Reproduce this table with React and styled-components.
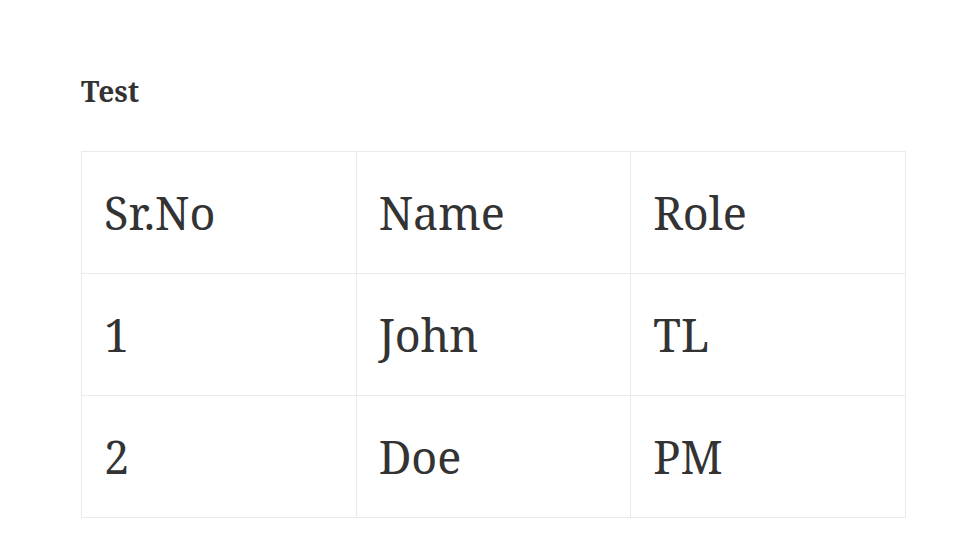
import React from 'react';
import styled, {createGlobalStyle} from 'styled-components';

const GlobalStyle = createGlobalStyle`
  body {
    margin: 0;
    background: #ffffff;
    font-family: "Noto Serif", "DejaVu Serif", serif;
    color: #333333;
  }
`;

const Page = styled.div`
  padding: 74px 67px 0 81px;
`;

const Heading = styled.h4`
  margin: 0 0 43px;
  font-size: 28px;
  font-weight: 700;
  line-height: 34px;
`;

const Table = styled.table`
  width: 825px;
  border-collapse: collapse;
  table-layout: fixed;
`;

const Cell = styled.td`
  height: 121px;
  padding: 0 22px;
  border: 1px solid #eaeaea;
  font-size: 45px;
  font-weight: 400;
  vertical-align: middle;
  text-align: left;
`;

const rows = [
  ['Sr.No', 'Name', 'Role'],
  ['1', 'John', 'TL'],
  ['2', 'Doe', 'PM'],
];

export default function App() {
  return (
    <Page>
      <GlobalStyle/>
      <Heading>Test</Heading>
      <Table>
        <tbody>
          {rows.map((row, idx) => (
            <tr key={idx}>
              {row.map((cell, i) => (
                <Cell key={i}>{cell}</Cell>
              ))}
            </tr>
          ))}
        </tbody>
      </Table>
    </Page>
  );
}
